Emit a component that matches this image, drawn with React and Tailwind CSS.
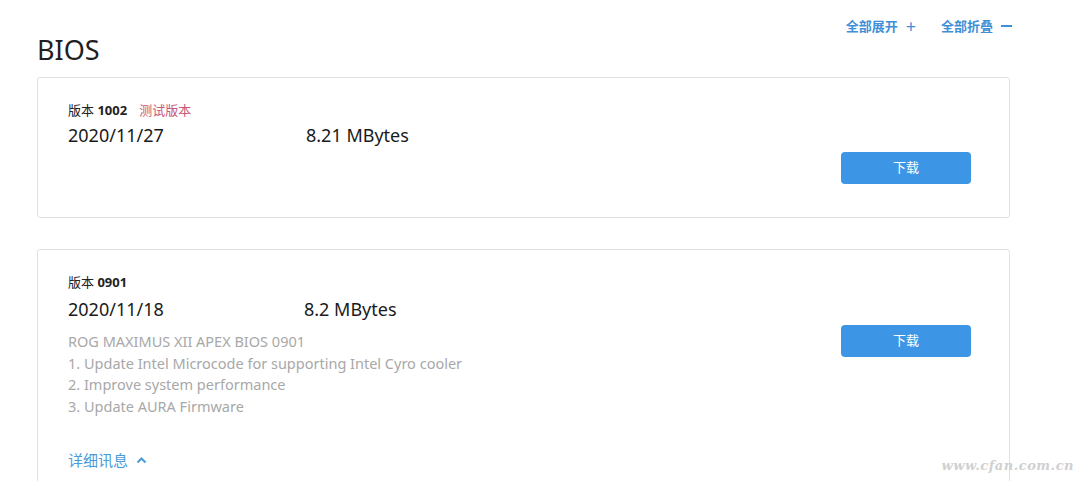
import React from "react";

const font = { fontFamily: '"Noto Sans", "Open Sans", "Noto Sans CJK SC", sans-serif' };

function DownloadButton() {
  return (
    <button className="w-[130px] h-[32px] rounded-[4px] bg-[#3d95e6] text-white text-[13px] flex items-center justify-center">
      下载
    </button>
  );
}

export default function App() {
  return (
    <div className="relative w-[1080px] h-[481px] overflow-hidden bg-white" style={font}>
      <div className="flex justify-end gap-[25px] pr-[68px] pt-[17px] text-[13px] text-[#3f8fd6] font-semibold leading-[18px]">
        <div className="flex items-center gap-[8px]">
          <span>全部展开</span>
          <span className="text-[18px] font-normal leading-[18px]">+</span>
        </div>
        <div className="flex items-center gap-[8px]">
          <span>全部折叠</span>
          <span className="w-[11px] h-[2px] bg-[#3f8fd6]" />
        </div>
      </div>

      <div className="pl-[37px] w-[1010px]">
        <h1 className="text-[27px] leading-[30px] text-[#1f1f1f] mb-[12px]">BIOS</h1>

        <div className="flex justify-between border border-[#e2e2e2] rounded-[3px]">
          <div className="pl-[30px] pt-[23px]">
            <div className="text-[13px] leading-[18px] text-[#222]">
              版本 <span className="font-bold">1002</span>
              <span className="ml-[12px] text-[#c9587a]">测试版本</span>
            </div>
            <div className="flex mt-[4px] text-[18px] leading-[24px] text-[#1a1a1a]">
              <span className="w-[238px]">2020/11/27</span>
              <span>8.21 MBytes</span>
            </div>
          </div>
          <div className="pt-[74px] pr-[38px] pb-[33px]">
            <DownloadButton />
          </div>
        </div>

        <div className="flex justify-between border border-[#e2e2e2] rounded-[3px] mt-[31px] h-[260px]">
          <div className="pl-[30px] pt-[23px]">
            <div className="text-[13px] leading-[18px] text-[#222]">
              版本 <span className="font-bold">0901</span>
            </div>
            <div className="flex mt-[6px] text-[18px] leading-[24px] text-[#1a1a1a]">
              <span className="w-[236px]">2020/11/18</span>
              <span>8.2 MBytes</span>
            </div>
            <div className="mt-[10px] text-[14.5px] leading-[21.5px] text-[#a8a8a8]">
              <div>ROG MAXIMUS XII APEX BIOS 0901</div>
              <div>1. Update Intel Microcode for supporting Intel Cyro cooler</div>
              <div>2. Improve system performance</div>
              <div>3. Update AURA Firmware</div>
            </div>
            <div className="mt-[32px] flex items-center gap-[8px] text-[15px] leading-[22px] text-[#4a9ad8]">
              <span>详细讯息</span>
              <svg width="11" height="8" viewBox="0 0 11 8" fill="none">
                <path d="M1.5 6.5L5.5 2.5L9.5 6.5" stroke="#4a9ad8" strokeWidth="2" />
              </svg>
            </div>
          </div>
          <div className="pt-[75px] pr-[38px]">
            <DownloadButton />
          </div>
        </div>
      </div>

      <div
        className="absolute right-[6px] bottom-[6px] text-[13px] italic font-bold text-[#d0d0d0] tracking-[0.5px]"
        style={{ fontFamily: '"DejaVu Serif", serif' }}
      >
        www.cfan.com.cn
      </div>
    </div>
  );
}
